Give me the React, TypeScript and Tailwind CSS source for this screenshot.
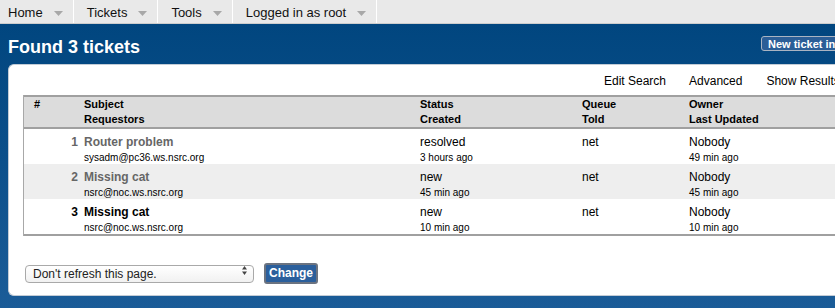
import React from "react";

const font = { fontFamily: '"Liberation Sans", Arial, Helvetica, sans-serif' };

function Arrow() {
  return (
    <svg width="9" height="5" viewBox="0 0 9 5" className="ml-[11px] mt-[3px]">
      <path d="M0 0 L9 0 L4.5 5 Z" fill="#a8a8a8" />
    </svg>
  );
}

function MenuItem({ label, first }: { label: string; first?: boolean }) {
  return (
    <div
      className={`flex h-[23px] items-center border-r border-white pr-[10px] ${
        first ? "pl-[8px]" : "pl-[13px]"
      }`}
    >
      <span className="text-[13px] leading-[15px] text-[#111] pt-[1px]">{label}</span>
      <Arrow />
    </div>
  );
}

type Row = {
  n: number;
  subject: string;
  req: string;
  status: string;
  created: string;
  queue: string;
  owner: string;
  updated: string;
  bg: string;
  color: string;
};

const rows: Row[] = [
  {
    n: 1,
    subject: "Router problem",
    req: "sysadm@pc36.ws.nsrc.org",
    status: "resolved",
    created: "3 hours ago",
    queue: "net",
    owner: "Nobody",
    updated: "49 min ago",
    bg: "bg-white",
    color: "text-[#666666]",
  },
  {
    n: 2,
    subject: "Missing cat",
    req: "nsrc@noc.ws.nsrc.org",
    status: "new",
    created: "45 min ago",
    queue: "net",
    owner: "Nobody",
    updated: "45 min ago",
    bg: "bg-[#eeeeee]",
    color: "text-[#666666]",
  },
  {
    n: 3,
    subject: "Missing cat",
    req: "nsrc@noc.ws.nsrc.org",
    status: "new",
    created: "10 min ago",
    queue: "net",
    owner: "Nobody",
    updated: "10 min ago",
    bg: "bg-white",
    color: "text-black",
  },
];

const cols = "grid grid-cols-[60px_336px_162px_107px_1fr]";

export default function App() {
  return (
    <div className="w-[835px] h-[308px] overflow-hidden bg-white" style={font}>
      {/* Menu bar */}
      <div className="flex h-[24px] w-full bg-[#e9e9e9] border-b border-[#cdcdcd]">
        <MenuItem label="Home" first />
        <MenuItem label="Tickets" />
        <MenuItem label="Tools" />
        <MenuItem label="Logged in as root" />
      </div>

      {/* Blue body */}
      <div className="h-[284px] bg-[linear-gradient(180deg,#01467f_0%,#0b4f8a_45%,#1b5c98_100%)] pt-[13px]">
        <div className="flex items-start w-[900px] pl-[8px] mb-[7px]">
          <h1 className="w-[753px] text-[18px] leading-[20px] font-bold text-white">
            Found 3 tickets
          </h1>
          <button className="mt-[-1px] h-[15px] rounded-[3px] border border-[#aab4c2] bg-[#2b5e97] pl-[6px] pr-[40px] text-[11px] font-bold leading-[12px] text-white">
            New ticket in
          </button>
        </div>

        {/* Panel */}
        <div className="ml-[8px] w-[900px] h-[232px] rounded-l-[6px] border-l border-t border-b border-[#c3ccd6] bg-white">
          <div className="flex gap-[23px] pl-[595px] pt-[9px] text-[12px] leading-[14px] text-black">
            <span>Edit Search</span>
            <span>Advanced</span>
            <span className="pl-[1px]">Show Results</span>
          </div>

          {/* Table */}
          <div className="ml-[14px] mt-[7px] border-l border-[#a8a8a8]">
            <div className="border-t-2 border-b-2 border-[#a0a0a0] bg-[#dcdcdc]">
              <div className={`${cols} h-[30px] text-[11px] leading-[15px] font-bold text-black`}>
                <div className="pl-[10px]">#</div>
                <div>
                  <div>Subject</div>
                  <div>Requestors</div>
                </div>
                <div>
                  <div>Status</div>
                  <div>Created</div>
                </div>
                <div>
                  <div>Queue</div>
                  <div>Told</div>
                </div>
                <div>
                  <div>Owner</div>
                  <div>Last Updated</div>
                </div>
              </div>
            </div>
            <div className="border-b-2 border-[#a0a0a0]">
              {rows.map((r) => (
                <div key={r.n} className={`${cols} h-[35px] pt-[5px] ${r.bg}`}>
                  <div className={`text-right pr-[6px] text-[12px] leading-[17px] font-bold ${r.color}`}>
                    {r.n}
                  </div>
                  <div>
                    <div className={`text-[12px] leading-[17px] font-bold ${r.color}`}>{r.subject}</div>
                    <div className="text-[10px] leading-[13px] text-black">{r.req}</div>
                  </div>
                  <div>
                    <div className="text-[12px] leading-[17px] text-black">{r.status}</div>
                    <div className="text-[10px] leading-[13px] text-black">{r.created}</div>
                  </div>
                  <div>
                    <div className="text-[12px] leading-[17px] text-black">{r.queue}</div>
                  </div>
                  <div>
                    <div className="text-[12px] leading-[17px] text-black">{r.owner}</div>
                    <div className="text-[10px] leading-[13px] text-black">{r.updated}</div>
                  </div>
                </div>
              ))}
            </div>
          </div>

          {/* Refresh controls */}
          <div className="mt-[25px] ml-[16px] flex items-center gap-[10px]">
            <div className="relative">
              <select
                className="h-[18px] w-[229px] appearance-none rounded-[4px] border border-[#a9a9a9] bg-[linear-gradient(180deg,#ffffff_0%,#f1f1f1_100%)] pl-[7px] text-[12px] leading-[16px] text-[#222] outline-none"
                defaultValue="0"
              >
                <option value="0">Don't refresh this page.</option>
              </select>
              <svg
                width="5"
                height="9"
                viewBox="0 0 5 9"
                className="pointer-events-none absolute right-[7px] top-[5px]"
              >
                <path d="M0 3.5 L2.5 0 L5 3.5 Z" fill="#444" />
                <path d="M0 5.5 L2.5 9 L5 5.5 Z" fill="#444" />
              </svg>
            </div>
            <button className="h-[21px] w-[54px] rounded-[3px] border-2 border-[#6b7380] bg-[#2b5f9c] text-[12px] font-bold leading-[14px] text-white">
              Change
            </button>
          </div>
        </div>
      </div>
    </div>
  );
}
